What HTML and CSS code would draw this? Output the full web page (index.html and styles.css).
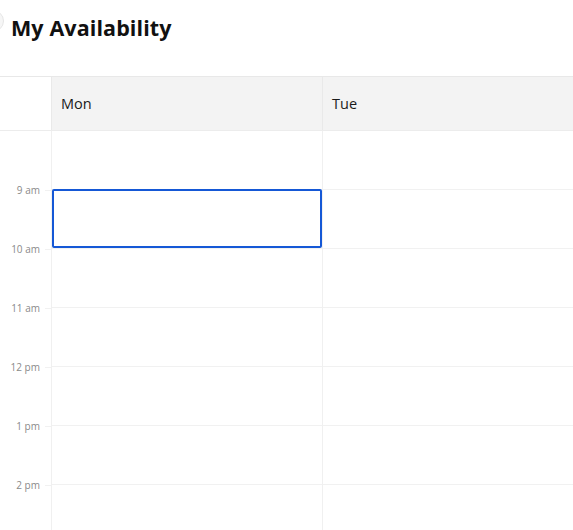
FILE: index.html
```html
<!DOCTYPE html>
<html lang="en">
<head>
<meta charset="utf-8">
<title>My Availability</title>
<link rel="stylesheet" href="styles.css">
</head>
<body>
<div class="page">
  <header class="title-bar">
    <span class="back-btn"></span>
    <h1 class="title">My Availability</h1>
  </header>
  <div class="calendar">
    <div class="head-row">
      <div class="head-gutter"></div>
      <div class="head-day">Mon</div>
      <div class="head-day">Tue</div>
    </div>
    <div class="grid">
      <div class="gutter"><span class="label">9 am</span><span class="tick"></span></div>
      <div class="cell"></div>
      <div class="cell"></div>

      <div class="gutter"><span class="label">10 am</span><span class="tick"></span></div>
      <div class="cell"><div class="selection"></div></div>
      <div class="cell"></div>

      <div class="gutter"><span class="label">11 am</span><span class="tick"></span></div>
      <div class="cell"></div>
      <div class="cell"></div>

      <div class="gutter"><span class="label">12 pm</span><span class="tick"></span></div>
      <div class="cell"></div>
      <div class="cell"></div>

      <div class="gutter"><span class="label">1 pm</span><span class="tick"></span></div>
      <div class="cell"></div>
      <div class="cell"></div>

      <div class="gutter"><span class="label">2 pm</span><span class="tick"></span></div>
      <div class="cell"></div>
      <div class="cell"></div>

      <div class="gutter"></div>
      <div class="cell"></div>
      <div class="cell"></div>
    </div>
  </div>
</div>
</body>
</html>
```

FILE: styles.css
```css
html, body {
  margin: 0;
  padding: 0;
  background: #ffffff;
}

body {
  font-family: "Open Sans", "Liberation Sans", sans-serif;
  color: #111111;
  overflow: hidden;
}

.page {
  width: 573px;
  height: 530px;
  overflow: hidden;
}

.title-bar {
  height: 76px;
  display: flex;
  align-items: flex-start;
  gap: 7px;
}

.back-btn {
  width: 20px;
  height: 20px;
  margin-left: -18px;
  margin-top: 10px;
  border-radius: 50%;
  background: #f6f6f6;
  border: 1px solid #e6e6e6;
  flex: none;
}

.title {
  margin: 14px 0 0 0;
  font-size: 21.5px;
  line-height: 28px;
  font-weight: 700;
  letter-spacing: 0.1px;
  color: #111111;
}

.calendar {
  width: 595px;
}

.head-row {
  display: grid;
  grid-template-columns: 51px 271px 272px;
  border-top: 1px solid #e8e8e8;
  border-bottom: 1px solid #ececec;
  height: 53px;
}

.head-gutter {
  background: #ffffff;
}

.head-day {
  background: #f3f3f3;
  border-left: 1px solid #e9e9e9;
  padding-left: 9px;
  display: flex;
  align-items: center;
  font-size: 14.5px;
  color: #1a1a1a;
}

.grid {
  display: grid;
  grid-template-columns: 51px 271px 272px;
  grid-auto-rows: 59px;
}

.gutter {
  display: flex;
  justify-content: flex-end;
  align-items: flex-end;
}

.label {
  font-size: 10px;
  line-height: 12px;
  color: #8a8a8a;
  margin-bottom: -6px;
  margin-right: 5px;
  white-space: nowrap;
}

.tick {
  width: 6px;
  height: 1px;
  background: #f1f1f1;
  margin-bottom: -1px;
}

.cell {
  border-left: 1px solid #f0f0f0;
  border-bottom: 1px solid #f1f1f1;
}

.selection {
  box-sizing: border-box;
  height: calc(100% + 1px);
  margin-top: -1px;
  border: 2px solid #1558d6;
  border-radius: 2px;
}
```
